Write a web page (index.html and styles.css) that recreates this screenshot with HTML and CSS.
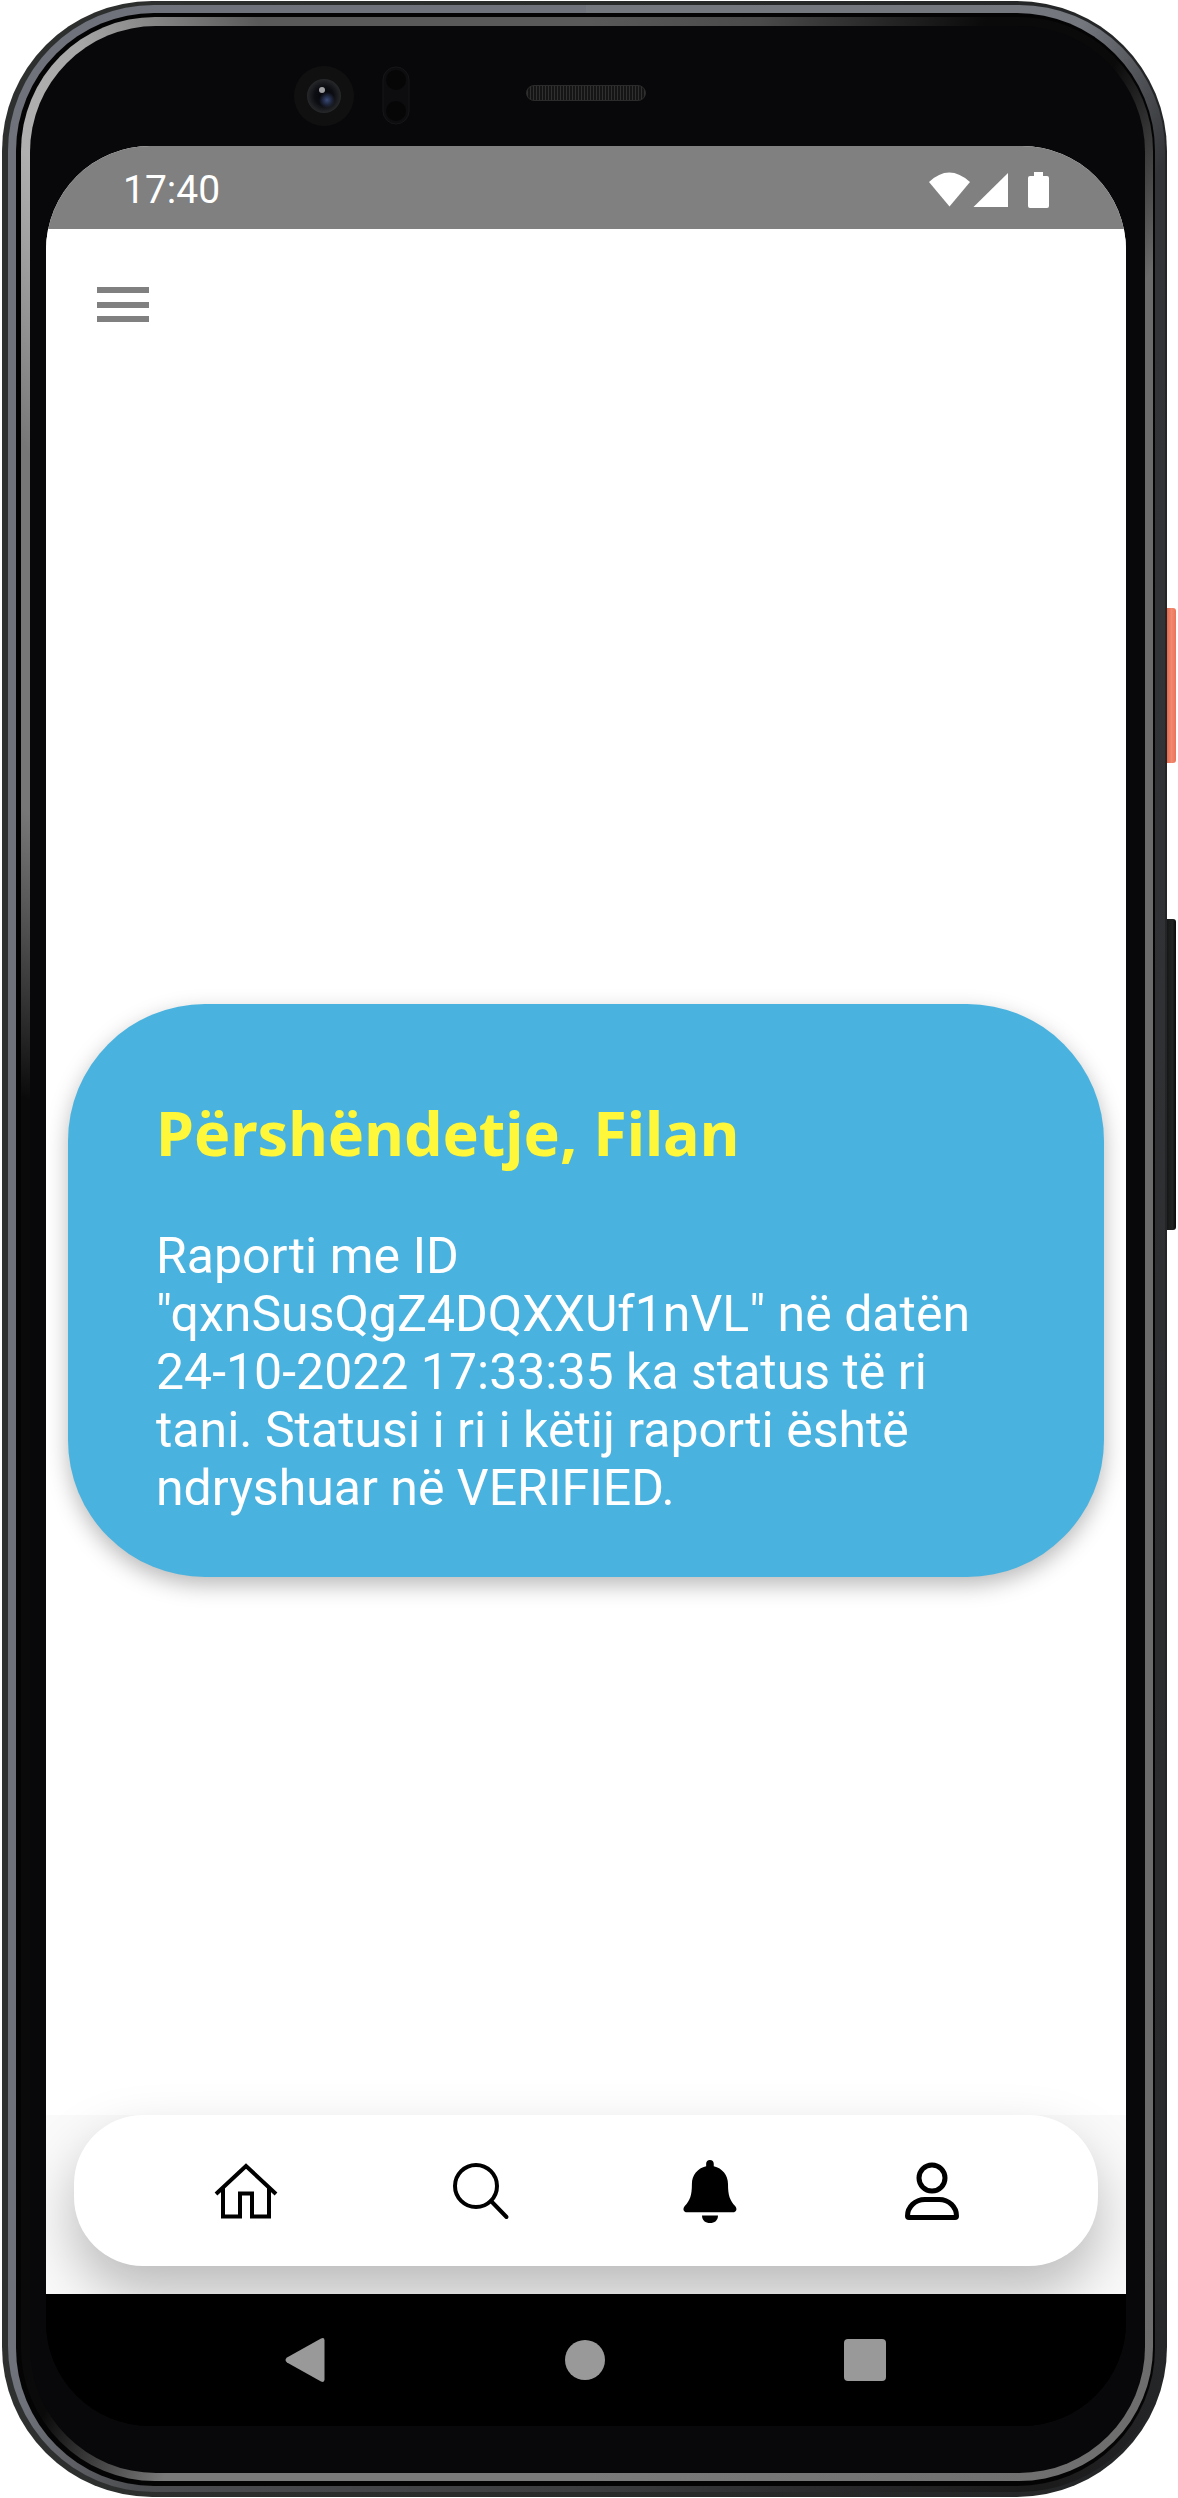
FILE: index.html
```html
<!DOCTYPE html>
<html lang="sq">
<head>
<meta charset="utf-8">
<meta name="viewport" content="width=device-width, initial-scale=1">
<title>Raporti</title>
<link rel="stylesheet" href="styles.css">
</head>
<body>
<div class="device">
  <span class="side-key side-key-power"></span>
  <span class="side-key side-key-volume"></span>
  <div class="metal">
    <div class="groove">
      <div class="rim">
        <div class="glass">
          <div class="sensors">
            <svg width="116" height="62" viewBox="0 0 116 62" aria-hidden="true">
              <defs>
                <radialGradient id="lens" cx="50%" cy="50%" r="50%">
                  <stop offset="0" stop-color="#05060a"/>
                  <stop offset=".55" stop-color="#0c0d12"/>
                  <stop offset="1" stop-color="#27282a"/>
                </radialGradient>
                <radialGradient id="flare" cx="50%" cy="50%" r="50%">
                  <stop offset="0" stop-color="#3a4a78"/>
                  <stop offset="1" stop-color="#3a4a78" stop-opacity="0"/>
                </radialGradient>
              </defs>
              <circle cx="30" cy="31" r="30" fill="#101011"/>
              <circle cx="30" cy="31" r="17" fill="url(#lens)"/>
              <circle cx="33" cy="35" r="8" fill="url(#flare)"/>
              <circle cx="28" cy="25" r="3" fill="#a0a0a3"/>
              <rect x="89" y="2" width="26" height="57" rx="13" fill="#0d0d0f" stroke="#161618"/>
              <circle cx="102" cy="15" r="10" fill="#060607"/>
              <circle cx="102" cy="46" r="10" fill="#060607"/>
            </svg>
            <span class="speaker"></span>
          </div>

          <div class="screen">
            <div class="status">
              <time class="clock">17:40</time>
              <svg width="120" height="36" viewBox="0 0 120 36" fill="#fff" aria-hidden="true">
                <path d="M0 10Q20-9 41 10L20.500 34.500Z"/>
                <path d="M44.500 35L79 1V35Z"/>
                <path d="M105 0h9v4h4q2 0 2 2v28q0 2-2 2h-17q-2 0-2-2V6q0-2 2-2h4z"/>
              </svg>
            </div>

            <header class="toolbar">
              <button class="icon-button" type="button" aria-label="Menu">
                <svg width="52" height="36" viewBox="0 0 52 36" fill="#808080" aria-hidden="true">
                  <path d="M0 0h52v6H0zM0 15h52v6H0zM0 29h52v6H0z"/>
                </svg>
              </button>
            </header>

            <main class="content">
              <article class="card">
                <h1 class="card-title">Përshëndetje, Filan</h1>
                <p class="card-text">Raporti me ID "qxnSusQgZ4DQXXUf1nVL" në datën 24-10-2022 17:33:35 ka status të ri tani. Statusi i ri i këtij raporti është ndryshuar në VERIFIED.</p>
              </article>
            </main>

            <div class="dock">
              <nav class="tabs" aria-label="Navigimi">
                <button class="icon-button" type="button" aria-label="Kreu">
                  <svg width="76" height="66" viewBox="0 0 76 66" fill="none" stroke="#000" stroke-width="4" aria-hidden="true">
                    <path d="M8 36L38 8L68 36"/>
                    <path d="M15 30V58.500H32V35.500H44V58.500H61V30"/>
                  </svg>
                </button>
                <button class="icon-button" type="button" aria-label="Kërko">
                  <svg width="66" height="66" viewBox="0 0 66 66" fill="none" stroke="#000" stroke-width="4" aria-hidden="true">
                    <circle cx="28" cy="28" r="21"/>
                    <path d="M43 43L58.500 59" stroke-linecap="round"/>
                  </svg>
                </button>
                <button class="icon-button" type="button" aria-label="Njoftime">
                  <svg width="62" height="66" viewBox="0 0 62 66" aria-hidden="true">
                    <path d="M31 2c2.500 0 4 1.700 4 4v2.500C44 10.500 50 18 50 27c0 12 2 17 7.500 23 3 4 .5 6.500-2 6.500h-49c-2.500 0-5-2.500-2-6.500C10 44 12 39 12 27 12 18 18 10.500 27 8.500V6c0-2.300 1.500-4 4-4z" transform="translate(1.500 0) scale(.95 .96)"/>
                    <path d="M23 57.500h16c0 5-3.500 7.500-8 7.500s-8-2.500-8-7.500z"/>
                  </svg>
                </button>
                <button class="icon-button" type="button" aria-label="Profili">
                  <svg width="54" height="66" viewBox="0 0 54 66" fill="none" stroke="#000" stroke-width="5" aria-hidden="true">
                    <circle cx="27" cy="20" r="13"/>
                    <path d="M20 41.500H34C44 41.500 51.500 49 51.500 58Q51.500 59.500 50 59.500H4Q2.500 59.500 2.500 58C2.500 49 10 41.500 20 41.500Z"/>
                  </svg>
                </button>
              </nav>
            </div>

            <div class="system-bar">
              <button class="icon-button" type="button" aria-label="Prapa">
                <svg width="42" height="46" viewBox="0 0 42 46" fill="#999" aria-hidden="true">
                  <path d="M37 1.500Q40.500 0 40.500 3.500V42.500Q40.500 46 37 44.500L3 25.500Q0 23 3 20.500Z"/>
                </svg>
              </button>
              <button class="icon-button" type="button" aria-label="Ekrani bazë">
                <svg width="42" height="42" viewBox="0 0 42 42" fill="#999" aria-hidden="true"><circle cx="21" cy="21" r="20"/></svg>
              </button>
              <button class="icon-button" type="button" aria-label="Të fundit">
                <svg width="42" height="42" viewBox="0 0 42 42" fill="#999" aria-hidden="true"><rect width="42" height="42" rx="4"/></svg>
              </button>
            </div>
          </div>
        </div>
      </div>
    </div>
  </div>
</div>
</body>
</html>
```
FILE: styles.css
```css
* {
  box-sizing: border-box;
}

body {
  margin: 0;
  background: #fff;
  font-family: Roboto, "Liberation Sans", sans-serif;
}

/* Phone shell: each layer is one ring of the frame */
.device,
.metal,
.groove,
.rim,
.glass,
.screen {
  display: flex;
  flex-direction: column;
}

.metal,
.groove,
.rim,
.glass,
.screen {
  flex: 1;
}

.device {
  position: relative;
  min-height: calc(100vh - 2px);
  margin: 1px 11px 1px 2px;
  padding: 4px 2px 5px 6px;
  border-radius: 150px;
  background: linear-gradient(to right, #2e302f, #242526);
}

.metal {
  padding: 8px 10px 6px 8px;
  border-radius: 146px;
  background: conic-gradient(#74777e 0deg, #74777e 22deg, #323437 28deg, #2a2b2d 150deg, #1a1a1b 160deg, #3c3d3f 180deg, #4c4d50 200deg, #6f727a 206deg, #6f727a 360deg);
}

.groove {
  padding: 4px 2px 5px 5px;
  border-radius: 138px;
  background: #040405;
}

/* Light reflected along the inner edge, fading at two corners */
.rim {
  padding: 9px 8px 8px 9px;
  border-radius: 134px;
  background: conic-gradient(#595959 0deg, #4a4a4a 8deg, #0a0a0b 18deg, #0a0a0b 24deg, #6b6b6b 30deg, #6b6b6b 150deg, #7a7a7a 180deg, #7a7a7a 199deg, #0a0a0b 205deg, #0a0a0b 285deg, #777 308deg, #777 325deg, #b0b0b0 333deg, #a8a8a8 337deg, #595959 345deg, #595959 360deg);
}

.glass {
  padding: 0 19px 47px 16px;
  border-radius: 126px;
  background: #08080a;
}

.side-key {
  position: absolute;
  left: 100%;
  width: 9px;
  border-radius: 0 3px 3px 0;
}

.side-key-power {
  top: 607px;
  height: 155px;
  background: linear-gradient(to right, #e8674c, #f08a70 50%, #ea7458);
}

.side-key-volume {
  top: 918px;
  height: 311px;
  background: linear-gradient(to right, #151616, #232424 60%, #0a0a0a);
}

.sensors {
  display: flex;
  align-items: center;
  gap: 116px;
  height: 120px;
  padding: 20px 0 0 248px;
}

.speaker {
  width: 120px;
  height: 16px;
  margin-bottom: 6px;
  border: 1px solid #2b2b2b;
  border-radius: 8px;
  background: repeating-linear-gradient(to right, #303030 0, #303030 1px, #151515 1px, #151515 3px);
}

/* Screen */
.screen {
  overflow: hidden;
  border-radius: 104px;
  background: linear-gradient(#fff 50%, #000 50%);
}

.status {
  display: flex;
  align-items: center;
  justify-content: space-between;
  height: 83px;
  padding: 4px 77px 0;
  background: #808080;
  color: #fff;
}

.clock {
  font-size: 39px;
  line-height: 46px;
}

.icon-button {
  display: flex;
  align-items: center;
  justify-content: center;
  padding: 0;
  border: 0;
  background: none;
}

.icon-button svg {
  overflow: visible;
}

.toolbar {
  display: flex;
  align-items: center;
  height: 151px;
  padding: 0 51px;
  background: #fff;
}

.content {
  display: flex;
  flex: 1;
  flex-direction: column;
  justify-content: center;
  padding: 86px 22px 0;
  background: #fff;
}

.card {
  padding: 88px 88px 60px;
  border-radius: 137px;
  background: #4ab2de;
  box-shadow: 0 8px 22px rgba(0, 0, 0, 0.28);
  color: #fff;
}

.card-title {
  margin: 0 0 53px;
  color: #fff739;
  font-family: "Noto Sans", sans-serif;
  font-size: 61px;
  font-weight: 700;
  line-height: 82px;
}

.card-text {
  margin: 0;
  font-size: 50px;
  line-height: 58px;
}

.dock {
  padding: 0 28px 28px;
  background: #fafafa;
}

.tabs {
  display: flex;
  align-items: center;
  justify-content: space-between;
  height: 151px;
  padding: 0 139px 0 134px;
  border-radius: 69px;
  background: #fff;
  box-shadow: 0 27px 55px rgba(0, 0, 0, 0.26);
}

.system-bar {
  position: relative;
  display: flex;
  align-items: center;
  justify-content: space-between;
  height: 132px;
  padding: 0 240px 0 238px;
  background: #000;
}
```
